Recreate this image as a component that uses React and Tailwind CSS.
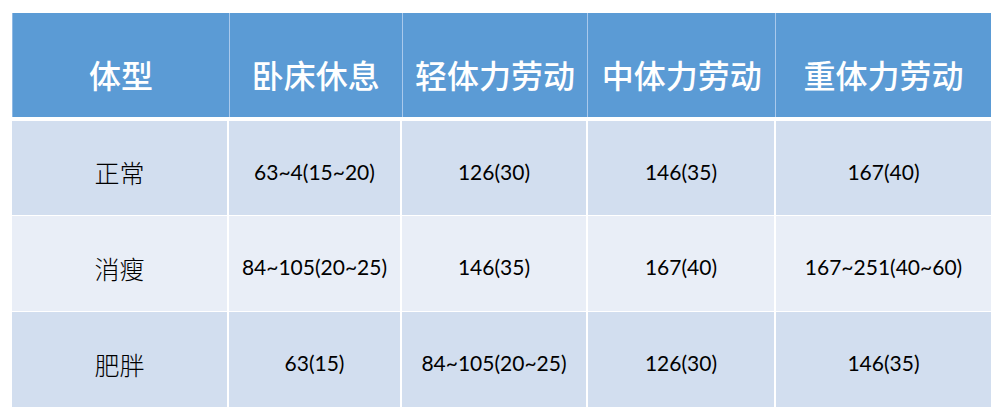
import React from 'react';

const cols = ['w-[217px]', 'w-[173px]', 'w-[186px]', 'w-[188px]', 'w-[215px]'];

const header = ['体型', '卧床休息', '轻体力劳动', '中体力劳动', '重体力劳动'];

const rows = [
  { name: '正常', vals: ['63~4(15~20)', '126(30)', '146(35)', '167(40)'], bg: 'bg-[#d2deef]', h: 'h-[95px]' },
  { name: '消瘦', vals: ['84~105(20~25)', '146(35)', '167(40)', '167~251(40~60)'], bg: 'bg-[#e9eef7]', h: 'h-[96px]' },
  { name: '肥胖', vals: ['63(15)', '84~105(20~25)', '126(30)', '146(35)'], bg: 'bg-[#d2deef]', h: 'h-[95px]' },
];

export default function App() {
  return (
    <div className="w-full h-[419px] bg-white pt-[13px] pl-[12px]">
      <div className="w-[979px] flex flex-col">
        {/* 表头 */}
        <div className="flex h-[104px] bg-[#5b9bd5] border-l border-[#8fb9e4]">
          {header.map((h, i) => (
            <div
              key={h}
              className={`${cols[i]} ${i < 4 ? 'border-r border-[#a9c9ec]' : ''} flex items-center justify-center pt-[18px] text-white text-[32px] font-medium leading-none`}
              style={{ fontFamily: '"Noto Sans CJK SC", sans-serif' }}
            >
              {h}
            </div>
          ))}
        </div>
        <div className="h-[4px] bg-white"></div>

        {/* 数据行 */}
        {rows.map((r, ri) => (
          <div key={r.name} className={`flex ${r.h} ${r.bg} ${ri < 2 ? 'border-b border-white' : ''}`}>
            <div
              className={`${cols[0]} border-r-2 border-white flex items-center justify-center pt-[9px] text-[25px] text-black leading-none font-light`}
              style={{ fontFamily: '"Noto Sans CJK SC", sans-serif' }}
            >
              {r.name}
            </div>
            {r.vals.map((v, vi) => (
              <div
                key={vi}
                className={`${cols[vi + 1]} ${vi < 3 ? 'border-r-2 border-white' : ''} flex items-center justify-center pt-[6px] text-[21px] text-black leading-none font-['Lato',sans-serif]`}
              >
                {v}
              </div>
            ))}
          </div>
        ))}
      </div>
    </div>
  );
}
